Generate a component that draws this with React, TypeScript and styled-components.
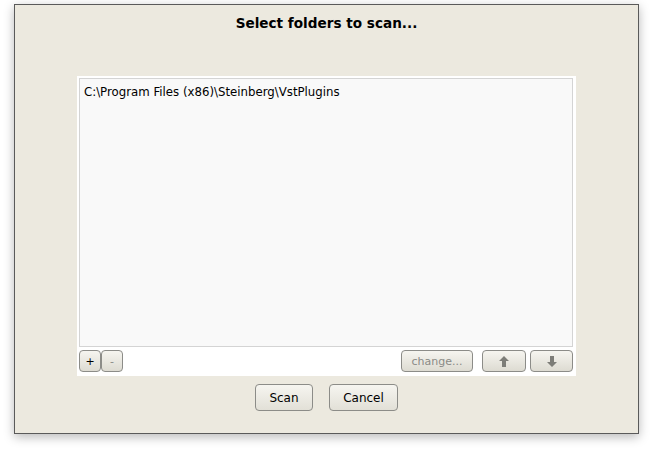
import React from "react";
import styled, { createGlobalStyle } from "styled-components";

const Global = createGlobalStyle`
  html, body { margin: 0; padding: 0; background: #ffffff; }
  body { font-family: "DejaVu Sans", Verdana, sans-serif; }
`;

const Page = styled.div`
  padding: 4px 15px 0 14px;
  width: 654px;
  height: 449px;
  box-sizing: border-box;
  overflow: hidden;
`;

const Window = styled.div`
  width: 625px;
  height: 430px;
  box-sizing: border-box;
  border: 1px solid #5a5a5a;
  background: #ece9df;
  box-shadow: 0 3px 10px rgba(0, 0, 0, 0.28);
  display: flex;
  flex-direction: column;
  align-items: center;
`;

const Title = styled.div`
  margin-top: 9px;
  height: 18px;
  line-height: 18px;
  font-size: 13.6px;
  font-weight: bold;
  color: #000;
`;

const Panel = styled.div`
  margin-top: 44px;
  width: 499px;
  height: 300px;
  box-sizing: border-box;
  background: #ffffff;
  padding: 2px 3px 4px 2px;
  display: flex;
  flex-direction: column;
`;

const List = styled.div`
  flex: 1;
  border: 1px solid #d4d4d4;
  background: #f9f9f9;
  padding: 6px 4px;
  font-size: 11.75px;
  color: #000;
  line-height: 14px;
`;

const Toolbar = styled.div`
  margin-top: 3px;
  height: 22px;
  display: flex;
  align-items: center;
`;

const Spacer = styled.div`
  flex: 1;
`;

const SmallButton = styled.button<{ $w: number; $gap?: number; $dim?: boolean }>`
  width: ${(p) => p.$w}px;
  height: 22px;
  margin-left: ${(p) => p.$gap ?? 0}px;
  box-sizing: border-box;
  border: 1px solid #8c8c88;
  border-radius: 4px;
  background: linear-gradient(#f6f5f0, #dddbd2);
  font-family: "DejaVu Sans", Verdana, sans-serif;
  font-size: 11px;
  color: ${(p) => (p.$dim ? "#8a8a86" : "#000")};
  padding: 0;
  display: flex;
  align-items: center;
  justify-content: center;
`;

const Actions = styled.div`
  margin-top: 8px;
  display: flex;
  gap: 16px;
`;

const Button = styled.button<{ $w: number }>`
  width: ${(p) => p.$w}px;
  height: 27px;
  box-sizing: border-box;
  border: 1px solid #8c8c88;
  border-radius: 4px;
  background: linear-gradient(#f6f5f0, #e2e0d7);
  font-family: "DejaVu Sans", Verdana, sans-serif;
  font-size: 12px;
  color: #000;
  padding: 0;
`;

const Arrow = ({ down }: { down?: boolean }) => (
  <svg width="10" height="11" viewBox="0 0 10 11" style={down ? { transform: "rotate(180deg)" } : undefined}>
    <path d="M5 0 L10 5 L7 5 L7 11 L3 11 L3 5 L0 5 Z" fill="#7d7d78" />
  </svg>
);

export default function App() {
  return (
    <>
      <Global />
      <Page>
        <Window>
          <Title>Select folders to scan...</Title>
          <Panel>
            <List>C:\Program Files (x86)\Steinberg\VstPlugins</List>
            <Toolbar>
              <SmallButton $w={22} $gap={0}>+</SmallButton>
              <SmallButton $w={22} $gap={0} $dim>-</SmallButton>
              <Spacer />
              <SmallButton $w={72} $dim>change...</SmallButton>
              <SmallButton $w={44} $gap={9}><Arrow /></SmallButton>
              <SmallButton $w={43} $gap={4}><Arrow down /></SmallButton>
            </Toolbar>
          </Panel>
          <Actions>
            <Button $w={58}>Scan</Button>
            <Button $w={69}>Cancel</Button>
          </Actions>
        </Window>
      </Page>
    </>
  );
}
